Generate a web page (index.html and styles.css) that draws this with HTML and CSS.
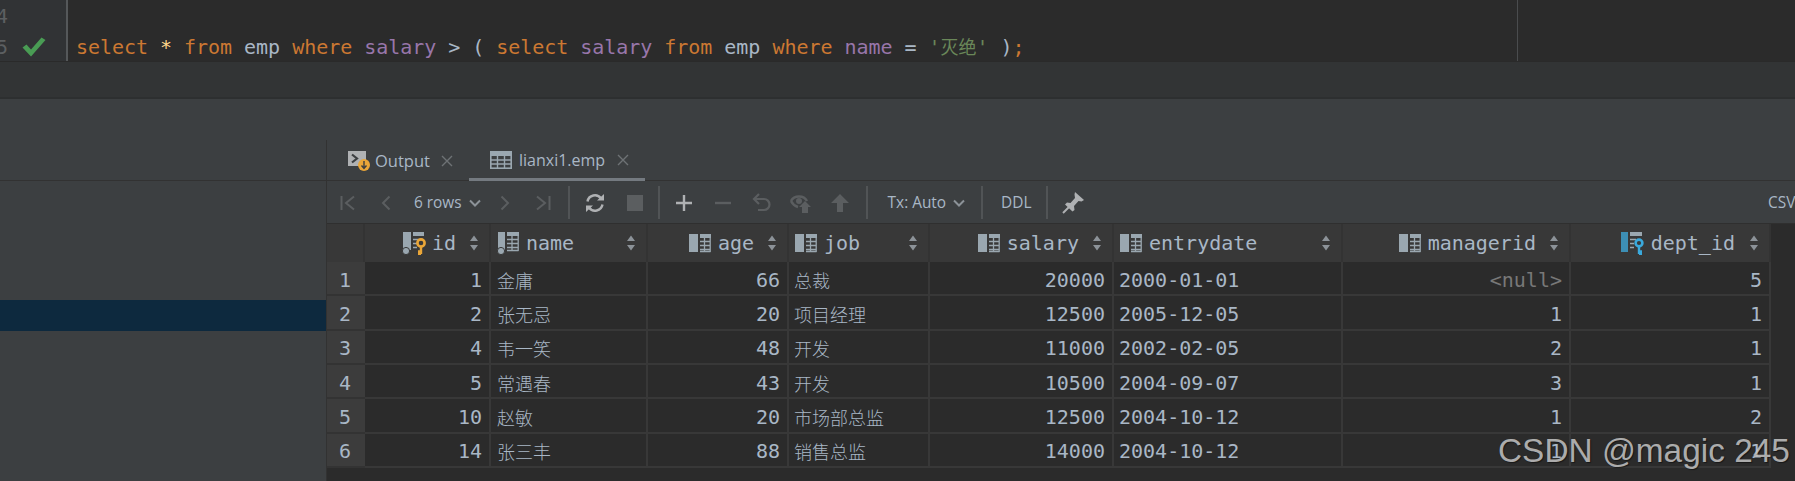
FILE: index.html
```html
<!DOCTYPE html>
<html lang="zh">
<head>
<meta charset="utf-8">
<title>lianxi1.emp</title>
<link rel="stylesheet" href="styles.css">
</head>
<body>
<svg class="defs" width="0" height="0" aria-hidden="true">
  <defs>
    <symbol id="col" viewBox="0 0 22 22">
      <rect x="0" y="2" width="9" height="18" fill="#9aa7b0"/>
      <rect x="11" y="2" width="11" height="4" fill="#9aa7b0"/>
      <path d="M11 9.5H21.5M11 13.5H21.5M11 17.5H21.5M11 19.5H21.5M15.5 6V20M21.2 6V20" stroke="#9aa7b0" stroke-width="1.3" fill="none"/>
    </symbol>
    <symbol id="colkey" viewBox="0 0 24 24">
      <rect x="1" y="1" width="8" height="18" fill="#9aa7b0"/>
      <rect x="11" y="1" width="11" height="4" fill="#9aa7b0"/>
      <path d="M11 8.5H17M11 12.5H15M11 16.5H15" stroke="#9aa7b0" stroke-width="1.3" fill="none"/>
      <circle cx="4" cy="20" r="3.6" fill="#9aa7b0" stroke="#383838"/>
      <circle cx="19" cy="12" r="3.6" fill="none" stroke="#eaa638" stroke-width="2.6"/>
      <path d="M19 15V23M19 20.5H16M19 23H16" stroke="#eaa638" stroke-width="2.4" fill="none"/>
    </symbol>
    <symbol id="coldot" viewBox="0 0 22 24">
      <rect x="1" y="1" width="7" height="18" fill="#9aa7b0"/>
      <rect x="10" y="1" width="12" height="4" fill="#9aa7b0"/>
      <path d="M10 8.5H21.5M10 12.5H21.5M10 16.5H21.5M10 19.5H21.5M15 5V20M21.2 5V20" stroke="#9aa7b0" stroke-width="1.3" fill="none"/>
      <circle cx="4" cy="20" r="3.6" fill="#9aa7b0" stroke="#383838"/>
    </symbol>
    <symbol id="colblue" viewBox="0 0 24 24">
      <rect x="0" y="1" width="7" height="20" fill="#3d8fb5"/>
      <rect x="9" y="1" width="12" height="4" fill="#9aa7b0"/>
      <path d="M9 8.5H15M9 12.5H13M9 16.5H13" stroke="#9aa7b0" stroke-width="1.3" fill="none"/>
      <circle cx="18" cy="12" r="3.4" fill="none" stroke="#3aa9dc" stroke-width="2.6"/>
      <path d="M18 15V23M18 20.5H21M18 23H21" stroke="#3aa9dc" stroke-width="2.4" fill="none"/>
    </symbol>
    <symbol id="sort" viewBox="0 0 10 16">
      <path d="M5 0.5L9 6H1ZM5 15.5L1 10H9Z" fill="#8c9298"/>
    </symbol>
    <symbol id="chev" viewBox="0 0 12 8">
      <path d="M1 1.5L6 6.5L11 1.5" fill="none" stroke="#8c9298" stroke-width="2"/>
    </symbol>
  </defs>
</svg>

<section class="editor">
  <div class="gutter">
    <div class="gline"><span class="lnum">4</span></div>
    <div class="gline"><span class="lnum">5</span>
      <svg class="check" width="24" height="20" viewBox="0 0 24 20"><path d="M0.5 10.5L9 19.5L23.5 3L19.5 0.5L9 12.5L4.5 7.5Z" fill="#499c54"/></svg>
    </div>
  </div>
  <div class="code">
    <div class="cline"></div>
    <div class="cline"><span class="k">select</span> <span class="st">*</span> <span class="k">from</span> <span class="t">emp</span> <span class="k">where</span> <span class="f">salary</span> <span class="t">&gt;</span> <span class="t">(</span> <span class="k">select</span> <span class="f">salary</span> <span class="k">from</span> <span class="t">emp</span> <span class="k">where</span> <span class="f">name</span> <span class="t">=</span> <span class="s">'<span class="cn">灭绝</span>'</span> <span class="t">)</span><span class="k">;</span></div>
  </div>
</section>
<div class="statusbar"></div>

<main class="lower">
  <aside class="side">
    <div class="side-top"></div>
    <div class="side-sel"></div>
  </aside>
  <section class="results">
    <div class="panel">
      <nav class="tabs">
        <div class="tab tab-output">
          <svg class="ticon ticon-out" width="22" height="22" viewBox="0 0 22 22"><rect x="0" y="1" width="18" height="15" fill="#afb1b3"/><path d="M4 4.5L9 8.5L4 12.5" fill="none" stroke="#3c3f41" stroke-width="2.2"/><circle cx="16" cy="15" r="6" fill="#eaa638"/><path d="M16 11V18M13.5 15.5L16 18.5L18.5 15.5" fill="none" stroke="#3c3f41" stroke-width="1.4"/></svg>
          <span>Output</span>
          <svg class="tclose" width="12" height="12" viewBox="0 0 12 12"><path d="M1 1L11 11M11 1L1 11" stroke="#6e7275" stroke-width="1.4"/></svg>
        </div>
        <div class="tab tab-active">
          <svg class="ticon" width="22" height="18" viewBox="0 0 22 18"><rect x="0.8" y="0.8" width="20.4" height="16.4" fill="none" stroke="#9aa7b0" stroke-width="1.6"/><rect x="0" y="0" width="22" height="5" fill="#9aa7b0"/><path d="M0 9H22M0 13H22M7.5 5V18M14.5 5V18" stroke="#9aa7b0" stroke-width="1.4"/></svg>
          <span>lianxi1.emp</span>
          <svg class="tclose" width="12" height="12" viewBox="0 0 12 12"><path d="M1 1L11 11M11 1L1 11" stroke="#6e7275" stroke-width="1.4"/></svg>
        </div>
      </nav>

      <div class="toolbar">
        <button class="btn"><svg width="16" height="16" viewBox="0 0 16 16"><path d="M1.5 1V15M14 1.5L6 8L14 14.5" fill="none" stroke="#5b5e60" stroke-width="2"/></svg></button>
        <button class="btn"><svg width="10" height="16" viewBox="0 0 10 16"><path d="M8.5 1.5L2 8L8.5 14.5" fill="none" stroke="#5b5e60" stroke-width="2"/></svg></button>
        <span class="tlabel rows">6 rows</span>
        <svg class="tchev" width="12" height="8"><use href="#chev"/></svg>
        <button class="btn btn-after"><svg width="10" height="16" viewBox="0 0 10 16"><path d="M1.5 1.5L8 8L1.5 14.5" fill="none" stroke="#5b5e60" stroke-width="2"/></svg></button>
        <button class="btn"><svg width="16" height="16" viewBox="0 0 16 16"><path d="M14.5 1V15M2 1.5L10 8L2 14.5" fill="none" stroke="#5b5e60" stroke-width="2"/></svg></button>
        <i class="sep"></i>
        <button class="btn btn-w40"><svg width="20" height="20" viewBox="0 0 20 20"><path d="M2.5 8.5A7.5 7.5 0 0 1 16 5.5M17.5 11.5A7.5 7.5 0 0 1 4 14.5" fill="none" stroke="#afb1b3" stroke-width="2.4"/><path d="M12 7.5H19V1ZM8 12.5H1V19Z" fill="#afb1b3"/></svg></button>
        <button class="btn btn-w40"><svg width="16" height="16" viewBox="0 0 16 16"><rect width="16" height="16" fill="#5b5e60"/></svg></button>
        <i class="sep sep-b"></i>
        <button class="btn btn-w39"><svg width="16" height="16" viewBox="0 0 16 16"><path d="M8 0V16M0 8H16" stroke="#afb1b3" stroke-width="2.4"/></svg></button>
        <button class="btn btn-w39"><svg width="16" height="4" viewBox="0 0 16 4"><path d="M0 2H16" stroke="#5b5e60" stroke-width="2.4"/></svg></button>
        <button class="btn btn-w39"><svg width="20" height="20" viewBox="0 0 20 20"><path d="M3 6H12A5.5 5.5 0 0 1 12 17H6" fill="none" stroke="#5b5e60" stroke-width="2.2"/><path d="M7 1L2 6L7 11" fill="none" stroke="#5b5e60" stroke-width="2.2"/></svg></button>
        <button class="btn btn-w39"><svg width="22" height="22" viewBox="0 0 22 22"><path d="M1 9C4 3 14 3 17 9" fill="none" stroke="#5b5e60" stroke-width="2.4"/><path d="M1 9C2.5 12 5 14 8 15" fill="none" stroke="#5b5e60" stroke-width="2.4"/><circle cx="9" cy="9" r="3" fill="#5b5e60"/><path d="M15 9L21 15H18V21H12V15H9Z" fill="#5b5e60"/></svg></button>
        <button class="btn btn-w39"><svg width="18" height="18" viewBox="0 0 18 18"><path d="M9 0L18 9H12V18H6V9H0Z" fill="#5b5e60"/></svg></button>
        <i class="sep sep-e"></i>
        <span class="tlabel tx">Tx: Auto</span>
        <svg class="tchev" width="12" height="8"><use href="#chev"/></svg>
        <i class="sep sep-c"></i>
        <span class="tlabel ddl">DDL</span>
        <i class="sep sep-d"></i>
        <button class="btn btn-pin"><svg width="22" height="22" viewBox="0 0 22 22"><path d="M13 0L22 8L19.5 9.5L16.5 9L12 14L12.5 18L10.5 19.5L3 12.5L5 10.5L8.5 11L13 6L12.5 2.5Z" fill="#afb1b3"/><path d="M7 15L1 21" stroke="#afb1b3" stroke-width="2"/></svg></button>
        <span class="tlabel csv">CSV</span>
      </div>

      <div class="grid">
        <div class="hd hd-gutter"></div>
        <div class="hd hd-r"><svg class="ci ci-k" width="24" height="24"><use href="#colkey"/></svg><span>id</span><svg class="so" width="10" height="16"><use href="#sort"/></svg></div>
        <div class="hd"><svg class="ci" width="22" height="24"><use href="#coldot"/></svg><span>name</span><svg class="so so-auto" width="10" height="16"><use href="#sort"/></svg></div>
        <div class="hd hd-r"><svg class="ci" width="22" height="22"><use href="#col"/></svg><span>age</span><svg class="so" width="10" height="16"><use href="#sort"/></svg></div>
        <div class="hd"><svg class="ci" width="22" height="22"><use href="#col"/></svg><span>job</span><svg class="so so-auto" width="10" height="16"><use href="#sort"/></svg></div>
        <div class="hd hd-r"><svg class="ci" width="22" height="22"><use href="#col"/></svg><span>salary</span><svg class="so" width="10" height="16"><use href="#sort"/></svg></div>
        <div class="hd"><svg class="ci" width="22" height="22"><use href="#col"/></svg><span>entrydate</span><svg class="so so-auto" width="10" height="16"><use href="#sort"/></svg></div>
        <div class="hd hd-r"><svg class="ci" width="22" height="22"><use href="#col"/></svg><span>managerid</span><svg class="so" width="10" height="16"><use href="#sort"/></svg></div>
        <div class="hd hd-r"><svg class="ci ci-k" width="24" height="24"><use href="#colblue"/></svg><span>dept_id</span><svg class="so so-wide" width="10" height="16"><use href="#sort"/></svg></div>

        <div class="rn">1</div><div class="c r">1</div><div class="c cj cn-name">金庸</div><div class="c r">66</div><div class="c cj">总裁</div><div class="c r">20000</div><div class="c">2000-01-01</div><div class="c r nul">&lt;null&gt;</div><div class="c r">5</div>
        <div class="rn">2</div><div class="c r">2</div><div class="c cj cn-name">张无忌</div><div class="c r">20</div><div class="c cj">项目经理</div><div class="c r">12500</div><div class="c">2005-12-05</div><div class="c r">1</div><div class="c r">1</div>
        <div class="rn">3</div><div class="c r">4</div><div class="c cj cn-name">韦一笑</div><div class="c r">48</div><div class="c cj">开发</div><div class="c r">11000</div><div class="c">2002-02-05</div><div class="c r">2</div><div class="c r">1</div>
        <div class="rn">4</div><div class="c r">5</div><div class="c cj cn-name">常遇春</div><div class="c r">43</div><div class="c cj">开发</div><div class="c r">10500</div><div class="c">2004-09-07</div><div class="c r">3</div><div class="c r">1</div>
        <div class="rn">5</div><div class="c r">10</div><div class="c cj cn-name">赵敏</div><div class="c r">20</div><div class="c cj">市场部总监</div><div class="c r">12500</div><div class="c">2004-10-12</div><div class="c r">1</div><div class="c r">2</div>
        <div class="rn">6</div><div class="c r">14</div><div class="c cj cn-name">张三丰</div><div class="c r">88</div><div class="c cj">销售总监</div><div class="c r">14000</div><div class="c">2004-10-12</div><div class="c r">1</div><div class="c r">1</div>
      </div>
    </div>
  </section>
</main>
<div class="watermark">CSDN @magic 245</div>
</body>
</html>
```

FILE: styles.css
```css
* { box-sizing: border-box; }
html, body { margin: 0; padding: 0; }
body {
  width: 1795px;
  height: 481px;
  overflow: hidden;
  position: relative;
  background: #3c3f41;
  font-family: "DejaVu Sans Mono", "Noto Sans CJK SC", monospace;
  font-size: 20px;
  color: #a9b7c6;
  display: flex;
  flex-direction: column;
}
.defs { position: absolute; }

/* editor */
.editor {
  height: 62px;
  flex: none;
  display: flex;
  background: #2b2b2b;
  border-bottom: 1px solid #2a2a2a;
  overflow: hidden;
}
.gutter {
  width: 68px;
  flex: none;
  background: #313335;
  border-right: 2px solid #55585a;
}
.gline {
  height: 31px;
  position: relative;
  display: flex;
  align-items: center;
}
.lnum {
  color: #5c5f61;
  margin-left: -4px;
  font-size: 20px;
}
.check { margin-left: 14px; }
.code {
  flex: 1;
  padding-left: 8px;
  background: linear-gradient(#4a4c4e, #4a4c4e) 1449px 0 / 1px 100% no-repeat;
}
.cline {
  height: 31px;
  line-height: 31px;
  white-space: pre;
  font-family: "DejaVu Sans Mono", monospace;
  letter-spacing: -0.04px;
}
.k { color: #cc7832; }
.st { color: #ffd68a; }
.t { color: #a9b7c6; }
.f { color: #9876aa; }
.s { color: #6a8759; }
.cn { font-family: "Noto Sans CJK SC", sans-serif; font-size: 18px; letter-spacing: 0; }

.statusbar {
  height: 37px;
  flex: none;
  background: #323435;
  border-bottom: 2px solid #2d2f30;
}

/* lower area */
.lower {
  flex: 1;
  min-height: 0;
  display: flex;
}
.side {
  width: 326px;
  flex: none;
}
.side-top {
  height: 82px;
  border-bottom: 1px solid #323232;
}
.side-sel {
  margin-top: 119px;
  height: 31px;
  background: #0d293e;
}
.results {
  flex: 1;
  min-width: 0;
  padding-top: 41px;
}
.panel {
  height: 100%;
  border-left: 1px solid #323232;
  display: flex;
  flex-direction: column;
  background: #2b2b2b;
}

/* tabs */
.tabs {
  height: 41px;
  flex: none;
  display: flex;
  background: #3c3f41;
  border-bottom: 1px solid #323232;
  font-family: "Open Sans", sans-serif;
  font-size: 16px;
  color: #a9b7c6;
}
.tab {
  display: flex;
  align-items: center;
  height: 40px;
}
.tab-output {
  width: 142px;
  padding-left: 21px;
  padding-top: 1px;
  font-size: 16.5px;
}
.tab-active {
  width: 176px;
  padding-left: 21px;
  border-bottom: 3px solid #747a80;
  height: 41px;
  padding-top: 2px;
}
.ticon { margin-right: 7px; flex: none; }
.ticon-out { margin-right: 5px; }
.tclose { margin-left: 12px; flex: none; }
.tab-output .tclose { margin-left: 11px; }

/* toolbar */
.toolbar {
  height: 43px;
  flex: none;
  display: flex;
  align-items: center;
  padding: 1px 0 0 2px;
  background: #3c3f41;
  border-bottom: 1px solid #2f2f2f;
  font-family: "Open Sans", sans-serif;
  font-size: 15.4px;
  overflow: hidden;
}
.btn {
  width: 38px;
  height: 30px;
  flex: none;
  padding: 0;
  border: 0;
  background: none;
  display: flex;
  align-items: center;
  justify-content: center;
}
.btn-after { margin-left: 5px; }
.btn-w40 { width: 40px; }
.btn-w39 { width: 39px; }
.btn-pin { margin-left: 6px; }
.sep {
  width: 2px;
  height: 33px;
  flex: none;
  background: #515456;
  margin: 0 5px 0 6px;
}
.sep-b { margin-left: 3px; }
.sep-e { margin-left: 6px; }
.sep-c { margin-left: 16px; margin-right: 0; }
.sep-d { margin-left: 15px; margin-right: 0; }
.tlabel { color: #a9b7c6; flex: none; white-space: nowrap; }
.rows { margin-left: 9px; }
.tx { margin-left: 15px; }
.ddl { margin-left: 18px; }
.tchev { margin-left: 7px; flex: none; }
.csv {
  margin-left: auto;
  width: 27px;
  overflow: hidden;
}

/* grid */
.grid {
  display: grid;
  grid-template-columns: 38px 126px 157px 141px 141px 184px 229px 228px 200px;
  grid-auto-rows: 34.33px;
  grid-template-rows: 38px;
  width: max-content;
}
.hd {
  background: #383838;
  border-right: 2px solid #333333;
  display: flex;
  align-items: center;
  padding: 0 10px 0 6px;
  font-size: 20px;
}
.hd-r { justify-content: flex-end; }
.ci { flex: none; margin-right: 7px; }
.ci-k { margin-right: 6px; margin-left: -2px; }
.so { flex: none; margin-left: 13px; }
.so-wide { margin-left: 14px; }
.so-auto { margin-left: auto; }
.rn {
  background: #3c3c3c;
  border-bottom: 2px solid #333333;
  display: flex;
  align-items: center;
  justify-content: center;
  padding: 3px 2px 0 0;
}
.c {
  background: #2b2b2b;
  border-right: 2px solid #383838;
  border-bottom: 2px solid #383838;
  display: flex;
  align-items: center;
  padding: 3px 7px 0 5px;
  white-space: nowrap;
}
.r { justify-content: flex-end; }
.cj {
  font-family: "Noto Sans CJK SC", sans-serif;
  font-size: 18px;
  font-weight: 300;
}
.cn-name { padding-left: 6px; }
.nul { color: #787878; }

.watermark {
  position: absolute;
  left: 1498px;
  top: 432px;
  font-family: "Liberation Sans", sans-serif;
  font-size: 33.4px;
  line-height: 38px;
  color: rgba(205, 205, 205, 0.82);
  text-shadow: 1px 1px 1px rgba(0, 0, 0, 0.45);
  white-space: nowrap;
}
```
